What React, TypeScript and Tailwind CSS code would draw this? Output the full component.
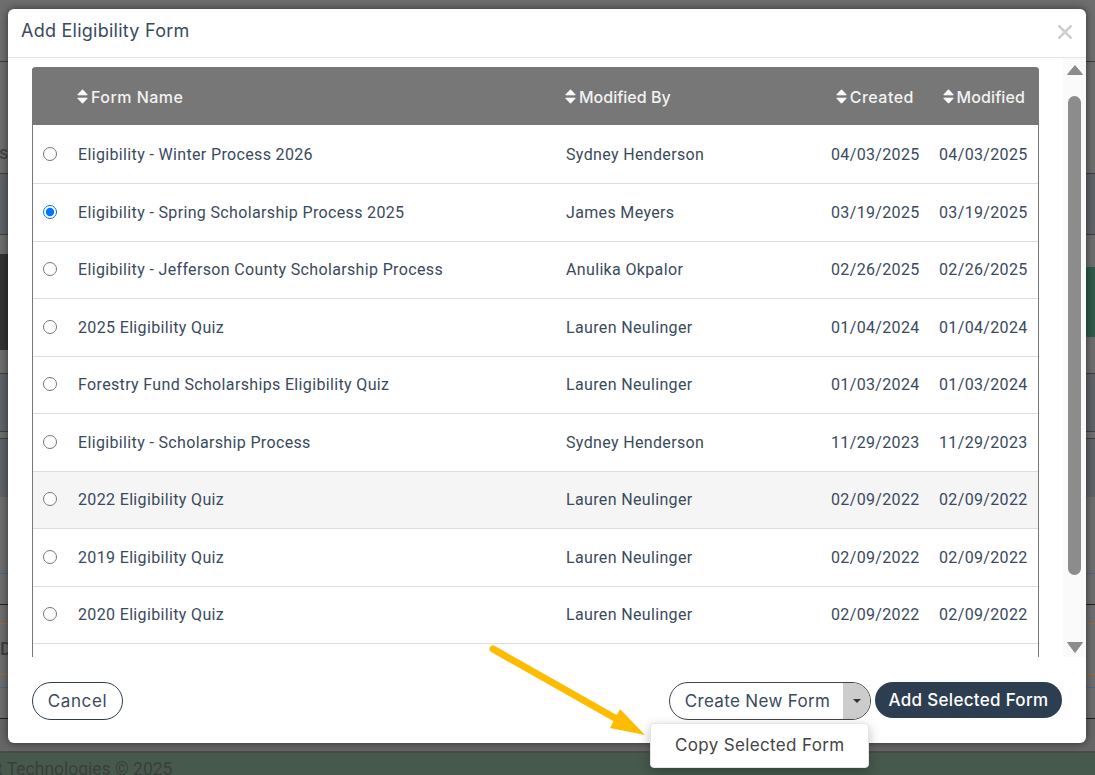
const FORMS = [
  { name: "Eligibility - Winter Process 2026", by: "Sydney Henderson", created: "04/03/2025", modified: "04/03/2025" },
  { name: "Eligibility - Spring Scholarship Process 2025", by: "James Meyers", created: "03/19/2025", modified: "03/19/2025", selected: true },
  { name: "Eligibility - Jefferson County Scholarship Process", by: "Anulika Okpalor", created: "02/26/2025", modified: "02/26/2025" },
  { name: "2025 Eligibility Quiz", by: "Lauren Neulinger", created: "01/04/2024", modified: "01/04/2024" },
  { name: "Forestry Fund Scholarships Eligibility Quiz", by: "Lauren Neulinger", created: "01/03/2024", modified: "01/03/2024" },
  { name: "Eligibility - Scholarship Process", by: "Sydney Henderson", created: "11/29/2023", modified: "11/29/2023" },
  { name: "2022 Eligibility Quiz", by: "Lauren Neulinger", created: "02/09/2022", modified: "02/09/2022", hovered: true },
  { name: "2019 Eligibility Quiz", by: "Lauren Neulinger", created: "02/09/2022", modified: "02/09/2022" },
  { name: "2020 Eligibility Quiz", by: "Lauren Neulinger", created: "02/09/2022", modified: "02/09/2022" },
]

const COLS = "grid grid-cols-[45px_488px_265px_108px_1fr] items-center"

// Dimmed page behind the modal, only its edges are visible
function Backdrop() {
  return (
    <div className="flex h-[775px] flex-col bg-[#6e6e6e] font-['Roboto',sans-serif] text-[#3a3f3c]">
      <div className="h-[62px] shrink-0 border-b border-[#3f3f3f]" />
      <div className="flex h-[112px] shrink-0 items-end border-b border-[#3f3f3f] pb-[6px] text-lg">
        <span className="-ml-px">sh</span>
      </div>
      <div className="h-[61px] shrink-0 border-b border-[#3f3f3f] bg-[#5f6368]" />
      <div className="h-[19px] shrink-0" />
      <div className="flex h-[96px] shrink-0">
        <div className="flex-1 bg-[#333333]" />
        <div className="flex w-[9px] flex-col justify-center">
          <div className="h-[70px] bg-[#2f5b4a]" />
        </div>
      </div>
      <div className="h-[24px] shrink-0 border-b border-[#3f3f3f]" />
      <div className="h-[58px] shrink-0 border-b border-[#3f3f3f] bg-[#5f6368]" />
      <div className="h-[7px] shrink-0 border-b border-[#3f3f3f]" />
      <div className="h-[58px] shrink-0 bg-[#5f6368]" />
      <div className="h-[77px] shrink-0 border-b border-[#4a6a8a]" />
      <div className="h-[31px] shrink-0 border-b border-[#222222]" />
      <div className="h-[19px] shrink-0 border-b border-[#9a6a3a]" />
      <div className="flex h-[51px] shrink-0 items-center border-b border-[#9a6a3a] text-lg font-medium">
        <span>D</span>
      </div>
      <div className="h-[13px] shrink-0 border-b border-[#4a6a8a]" />
      <div className="h-[31px] shrink-0 border-b border-[#222222]" />
      <div className="h-[34px] shrink-0 border-b-2 border-[#4a4a4a] bg-[#666666]" />
      <div className="h-[22px] shrink-0 bg-[#46594c] pt-[6px] text-[17.5px] leading-5">
        <span className="-ml-[3px] block">t Technologies © 2025</span>
      </div>
    </div>
  )
}

function SortHead({ label, className = "" }: { label: string; className?: string }) {
  return (
    <div className={`flex items-center gap-[3px] font-['Inter',sans-serif] text-[16px] font-medium text-[#f2f2f2] ${className}`}>
      <svg className="h-[15px] w-[11px] shrink-0" viewBox="0 0 11 15">
        <path d="M5.5 0.8 L10.2 5.8 H0.8 Z M0.8 9.2 H10.2 L5.5 14.2 Z" fill="#ffffff" stroke="#ffffff" strokeWidth="1" strokeLinejoin="round" />
      </svg>
      <span className="pt-[1px]">{label}</span>
    </div>
  )
}

function Scrollbar() {
  return (
    <div className="flex w-[23px] flex-col items-center bg-[#fafafa]">
      <svg className="mt-[7px] h-[10px] w-[16px]" viewBox="0 0 16 10">
        <path d="M8 0.5 L15.5 9.5 H0.5 Z" fill="#8c8c8c" stroke="#8c8c8c" strokeLinejoin="round" />
      </svg>
      <div className="mt-[21px] h-[479px] w-[13px] rounded-full bg-[#8c8c8c]" />
      <svg className="mt-[67px] h-[11px] w-[16px]" viewBox="0 0 16 11">
        <path d="M0.5 0.5 H15.5 L8 10.5 Z" fill="#8c8c8c" stroke="#8c8c8c" strokeLinejoin="round" />
      </svg>
    </div>
  )
}

export default function App() {
  return (
    <div className="relative h-[775px] w-[1095px] overflow-hidden">
      <Backdrop />

      <div className="absolute left-[8px] top-[9px] flex h-[734px] w-[1078px] flex-col rounded-[6px] bg-white text-[#3a4a5d] shadow-[0_0_8px_rgba(0,0,0,0.55)]">
        <div className="flex h-[49px] shrink-0 items-center justify-between border-b border-[#e5e5e5] pb-[5px] pl-[13px] pr-[13px]">
          <h4 className="font-['Inter',sans-serif] text-[18px] tracking-[0.25px]">Add Eligibility Form</h4>
          <svg className="mt-[3px] h-[16px] w-[16px]" viewBox="0 0 16 16">
            <path d="M1.5 1.5 L14.5 14.5 M14.5 1.5 L1.5 14.5" stroke="#cfcfcf" strokeWidth="2.6" />
          </svg>
        </div>

        <div className="flex h-[599px] shrink-0 overflow-hidden">
          <div className="flex-1 pl-[24px] pr-[24px] pt-[9px]">
            <div className="rounded-t-[4px] border-x border-[#777777]">
              <div className={`${COLS} -mx-px h-[58px] rounded-t-[4px] bg-[#777777]`}>
                <div />
                <SortHead label="Form Name" className="tracking-[0.45px]" />
                <SortHead label="Modified By" />
                <SortHead label="Created" className="justify-end pr-[24px] tracking-[0.5px]" />
                <SortHead label="Modified" className="justify-end pr-[14px] tracking-[0.1px]" />
              </div>
              <div className="pt-[1.5px] font-['Roboto',sans-serif] text-[16px] tracking-[0.35px]">
                {FORMS.map((f) => (
                  <div
                    key={f.name}
                    className={`${COLS} h-[57.5px] border-b border-[#dddddd] ${f.hovered ? "bg-[#f5f5f5]" : ""}`}
                  >
                    <div className="flex pb-[1.5px] pl-[10px]">
                      <input type="radio" name="form" defaultChecked={f.selected} className="h-[14px] w-[14px]" />
                    </div>
                    <div className="pt-[0.5px]">{f.name}</div>
                    <div className="pt-[0.5px]">{f.by}</div>
                    <div className="pt-[0.5px]">{f.created}</div>
                    <div className="pt-[0.5px]">{f.modified}</div>
                  </div>
                ))}
                <div className="h-[58px]" />
              </div>
            </div>
          </div>
          <Scrollbar />
        </div>

        <div className="flex flex-1 items-start justify-between pl-[24px] pr-[24px] pt-[25px] font-['Inter',sans-serif] text-[17px]">
          <button className="h-[38px] w-[91px] rounded-full border border-[#2d3e50] pt-[2px] tracking-[0.6px]">Cancel</button>
          <div className="flex items-start gap-[4px] tracking-[0.35px]">
            <div className="relative">
              <div className="flex h-[38px] w-[202px] overflow-hidden rounded-full border border-[#444444]">
                <button className="flex-1 pl-[2px] pt-[2px]">Create New Form</button>
                <button className="flex w-[27px] items-center justify-center bg-[#cccccc]">
                  <svg className="h-[4px] w-[8px]" viewBox="0 0 8 4">
                    <path d="M0 0 H8 L4 4 Z" fill="#333333" />
                  </svg>
                </button>
              </div>
              <div className="absolute left-[-19px] top-[41px] flex h-[45px] w-[219px] items-center rounded-[4px] border border-[#e5e5e5] bg-white pl-[24px] text-[#444444] shadow-[0_4px_12px_rgba(0,0,0,0.25)]">
                Copy Selected Form
              </div>
            </div>
            <button className="h-[36px] w-[187px] rounded-full bg-[#2d3e50] pt-[2px] font-medium tracking-[0.3px] text-white">
              Add Selected Form
            </button>
          </div>
        </div>
      </div>

      {/* annotation arrow */}
      <svg className="absolute left-[485px] top-[640px] h-[100px] w-[165px]" viewBox="485 640 165 100">
        <path d="M493 649 L622 722" stroke="#ffbb00" strokeWidth="7" strokeLinecap="round" />
        <path d="M620 709 L610 728 L645 735 Z" fill="#ffbb00" />
      </svg>
    </div>
  )
}
